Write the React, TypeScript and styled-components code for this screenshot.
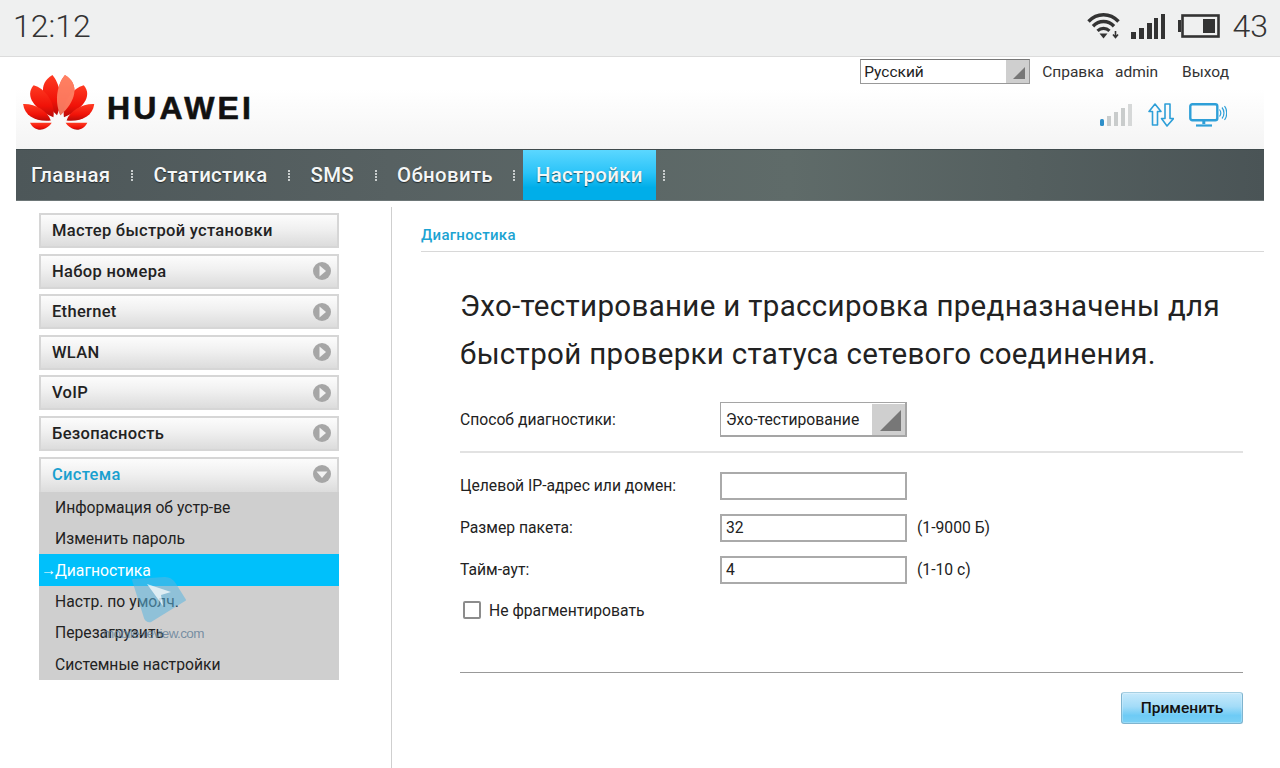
import React from "react";
import styled, { createGlobalStyle } from "styled-components";

const Global = createGlobalStyle`
  html, body { margin: 0; padding: 0; background: #fff; }
  body { font-family: Roboto, "Liberation Sans", sans-serif; color: #222; }
  * { box-sizing: border-box; }
`;
const Screen = styled.div`
  position: relative; width: 1280px; height: 768px; overflow: hidden; background: #fff;
`;
const StatusBar = styled.div`
  height: 57px; background: #eff0f0; border-bottom: 1px solid #dcdcdc;
  display: flex; align-items: center; justify-content: space-between; padding: 0 12px 4px 13px;
`;
const StatusText = styled.span`
  font-size: 32px; font-weight: 300; color: #333; line-height: 1;
`;
const StatusLevel = styled(StatusText)`
  margin-left: 2px;
`;
const StatusIcons = styled.div`
  display: flex; align-items: center; gap: 11px;
`;
const Page = styled.div`
  margin: 0 16px; display: flex; flex-direction: column; height: 711px;
`;
const Header = styled.header`
  height: 92px; background: linear-gradient(#fff 35%, #f4f4f4 100%);
  display: flex; justify-content: space-between; padding-left: 6px;
`;
const Brand = styled.div`
  display: flex; align-items: center; gap: 11px; padding-bottom: 3px; height: 92px;
`;
const BrandName = styled.span`
  font-family: "Liberation Sans", sans-serif; font-weight: 700; font-size: 32px; letter-spacing: 3.2px;
  color: #111; -webkit-text-stroke: 0.6px #111; line-height: 1; margin-top: 12px;
`;
const HeaderRight = styled.div`
  display: flex; flex-direction: column; align-items: flex-end; padding: 2px 35px 0 0;
`;
const TopLinks = styled.div`
  display: flex; align-items: center; font-size: 15.5px; color: #333; height: 25px;
`;
const LangSelect = styled.div`
  width: 170px; height: 25px; border: 1px solid #999; border-top-color: #777; display: flex; background: #fff;
  justify-content: space-between; padding-left: 3px; align-items: center; margin-right: 12px; color: #222;
`;
const ArrowBox = styled.div<{ $w: number }>`
  width: ${(p) => p.$w}px; align-self: stretch; background: #cfcfcf; display: flex; align-items: flex-end; justify-content: flex-end;
  padding: 0 4px 4px 0;
`;
const TopLink = styled.span<{ $ml?: number }>`
  margin-left: ${(p) => p.$ml ?? 0}px;
`;
const Conn = styled.div`
  display: flex; align-items: center; gap: 15px; margin: 19px 2px 0 0;
`;
const Nav = styled.nav`
  height: 52px; display: flex; align-items: stretch; padding-left: 2px;
  background: linear-gradient(90deg, #4d5759 0%, #576162 30%, #5f6b69 62%, #4a5456 100%);
  border-top: 1px solid #3f4a4c; border-bottom: 1px solid #6d7677;
`;
const NavItem = styled.div<{ $active?: boolean }>`
  padding: 0 13px; display: flex; align-items: center; font-size: 20.4px; font-weight: 500; color: #f4f6f6;
  text-shadow: 0 1px 1px rgba(0,0,0,.55); letter-spacing: 0.34px;
  background: ${(p) => (p.$active ? "linear-gradient(#5bd7ff 0%, #2cc4f8 45%, #00aee9 75%, #00aee9 100%)" : "none")};
`;
const NavSep = styled.div`
  width: 17px; display: flex; align-items: center; justify-content: center;
  &::before { content: ""; width: 2px; height: 11px; background: repeating-linear-gradient(#c8cdcd 0 2px, transparent 2px 3px); }
`;
const Body = styled.div`
  flex: 1; display: flex; padding-top: 6px;
`;
const Sidebar = styled.aside`
  width: 376px; border-right: 1px solid #cfcfcf; padding: 6px 0 0 23px; display: flex; flex-direction: column; gap: 5.6px;
`;
const MenuItem = styled.div<{ $open?: boolean }>`
  width: 300px; height: 35px; border: 2px solid #d6d6d6; ${(p) => p.$open && "border-bottom: 0; padding-bottom: 2px !important;"}
  background: linear-gradient(#fcfcfc 0%, #f0f0f0 45%, #dcdcdc 100%);
  display: flex; align-items: center; justify-content: space-between; padding: 0 6px 0 11px;
  font-size: 16.5px; font-weight: 500; color: ${(p) => (p.$open ? "#1aa0cf" : "#222")}; letter-spacing: 0.3px;
`;
const Group = styled.div`
  display: flex; flex-direction: column;
`;
const SubMenu = styled.div`
  width: 300px; background: #cfcfcf; display: flex; flex-direction: column;
`;
const SubItem = styled.div<{ $active?: boolean }>`
  height: 31.4px; display: flex; align-items: center; padding: 0 0 0 16px; font-size: 15.7px; position: relative;
  background: ${(p) => (p.$active ? "#00c0fb" : "transparent")}; color: ${(p) => (p.$active ? "#fff" : "#222")};
`;
const SubArrow = styled.span`
  position: absolute; left: 2px; top: 7px; font-family: "Liberation Sans", sans-serif; font-size: 15px; line-height: 17px; color: #fff;
`;
const Main = styled.main`
  flex: 1; padding: 22px 0 0 29px;
`;
const Crumb = styled.div`
  font-size: 15px; font-weight: 500; color: #1ba3d2; height: 23px; border-bottom: 1px solid #d8d8d8; letter-spacing: .3px; line-height: 13px;
`;
const Panel = styled.div`
  padding: 30px 21px 0 39px;
`;
const Title = styled.h1`
  margin: 0 0 24px 0; font-size: 29.5px; font-weight: 400; line-height: 48px; color: #222; letter-spacing: 0.32px; white-space: nowrap;
`;
const Row = styled.div<{ $h: number }>`
  display: flex; align-items: center; height: ${(p) => p.$h}px; font-size: 15.7px; color: #222;
`;
const Label = styled.div`
  width: 260px;
`;
const DiagSelect = styled.div`
  width: 187px; height: 35px; border: 1px solid #a5a5a5; border-width: 1px 2px 2px 1px; display: flex; justify-content: space-between;
  align-items: center; padding: 1px 0 0 5px; font-size: 15.7px;
`;
const Divider = styled.div<{ $c: string; $mt: number }>`
  height: 1.5px; background: ${(p) => p.$c}; margin-top: ${(p) => p.$mt}px;
`;
const Fields = styled.div`
  display: flex; flex-direction: column; gap: 14px; margin-top: 19px;
`;
const Input = styled.div`
  width: 187px; height: 28px; border: 2px solid #aaa; padding-left: 4px; display: flex; align-items: center; font-size: 15.7px;
`;
const Hint = styled.span`
  margin-left: 10px;
`;
const CheckRow = styled.div`
  display: flex; align-items: center; gap: 8px; margin: 17px 0 0 3px; font-size: 15.7px;
`;
const Check = styled.div`
  width: 18px; height: 18px; border: 2px solid #8c8c8c; border-radius: 2px;
`;
const Actions = styled.div`
  display: flex; justify-content: flex-end; margin-top: 19px;
`;
const Apply = styled.div`
  width: 122px; height: 32px; border: 1px solid #7fb4cf; border-top-color: #a6cfe2; border-radius: 3px;
  background: linear-gradient(#c6e9fb 0%, #a3dcf8 45%, #6ecbf5 75%, #7ad0f5 100%);
  display: flex; align-items: center; justify-content: center; font-size: 15.5px; font-weight: 500; color: #111; box-shadow: inset 0 0 0 1px rgba(255,255,255,.25);
`;
const Watermark = styled.div`
  position: absolute; left: 103px; top: 574px; width: 104px; height: 68px; pointer-events: none;
`;
const WatermarkMark = styled.svg`
  position: absolute; left: 26px; top: 2px;
`;
const WatermarkText = styled.span`
  position: absolute; left: 0; bottom: 0; font-family: "Liberation Sans", sans-serif; font-size: 13.5px; color: rgba(95,125,150,.8); letter-spacing: -0.65px; white-space: nowrap; line-height: 16px;
`;

const Chevron = ({ open }: { open?: boolean }) => (
  <svg width="18" height="18" viewBox="0 0 18 18">
    <circle cx="9" cy="9" r="9" fill="#a6a6a6" />
    {open ? <path d="M3.5 6.5h11L9 13z" fill="#f2f2f2" /> : <path d="M6.5 3.5v11L13 9z" fill="#f2f2f2" />}
  </svg>
);

const Petals = () => (
  <>
    <path d="M172 346C124 305 112 250 158 224C180 250 192 300 172 346Z" />
    <path d="M161 352C106 330 72 288 101 255C134 264 168 306 161 352Z" />
    <path d="M153 362C108 366 74 350 69 312C104 310 144 332 153 362Z" />
    <path d="M156 369H90C98 386 116 394 130 389C140 386 150 378 156 369Z" />
  </>
);

const Logo = () => (
  <svg width="74" height="58" viewBox="66 218 224 176">
    <defs>
      <linearGradient id="redL" x1="0" y1="0" x2="0" y2="1">
        <stop offset="0" stopColor="#ff3b22" />
        <stop offset="0.65" stopColor="#f01208" />
        <stop offset="1" stopColor="#b80b08" />
      </linearGradient>
    </defs>
    <g fill="url(#redL)">
      <Petals />
      <g transform="matrix(-1 0 0 1 354 0)">
        <Petals />
      </g>
    </g>
    <path d="M182 346C230 305 242 250 196 224C174 250 162 300 182 346Z" fill="#ff9878" opacity="0.75" />
  </svg>
);

const Wifi = () => (
  <svg width="33" height="26" viewBox="0 0 33 26" fill="none" stroke="#333" strokeLinecap="butt">
    <path d="M1.5 8.5C10-.5 23-.5 31.5 8.5" strokeWidth="3.4" />
    <path d="M6 13.2C12 7 21 7 27 13.2" strokeWidth="3.4" />
    <path d="M10.5 17.8C14 14.5 19 14.5 22.5 17.8" strokeWidth="3.2" />
    <path d="M12.5 20.5H20.5L16.5 25.5Z" fill="#333" stroke="none" />
    <path d="M28.5 18v5M26 21.5l2.5 3 2.5-3" strokeWidth="1.6" />
  </svg>
);
const Signal = () => (
  <svg width="36" height="25" viewBox="0 0 36 25" fill="#333">
    <rect x="0" y="18" width="5" height="7" /><rect x="8" y="14" width="5" height="11" />
    <rect x="16" y="9" width="5" height="16" /><rect x="23" y="4" width="4" height="21" /><rect x="30" y="0" width="4" height="25" />
  </svg>
);
const Battery = () => (
  <svg width="42" height="24" viewBox="0 0 42 24">
    <rect x="0" y="6" width="3" height="12" fill="#333" />
    <rect x="4.5" y="1.5" width="36" height="21" fill="none" stroke="#333" strokeWidth="2.6" />
    <rect x="25" y="5" width="12" height="14" fill="#333" />
  </svg>
);
const SmallSignal = () => (
  <svg width="33" height="23" viewBox="0 0 33 23">
    <rect x="0" y="15" width="4" height="7" rx="1.5" fill="#2e8fc9" />
    <rect x="7" y="12" width="4" height="10" fill="#c9cccc" /><rect x="14" y="8" width="4" height="14" fill="#c9cccc" />
    <rect x="21" y="4" width="4" height="18" fill="#c9cccc" /><rect x="28" y="0" width="4" height="22" fill="#d6d8d8" />
  </svg>
);
const UpDown = () => (
  <svg width="26" height="24" viewBox="0 0 26 24" fill="none" stroke="#2e9fd8" strokeWidth="1.6" strokeLinejoin="round">
    <path d="M7 1L1 8.5H4.5V22H9.5V8.5H13Z" />
    <path d="M19 23L25.5 15.5H22V1H17V15.5H13.5Z" />
  </svg>
);
const Monitor = () => (
  <svg width="38" height="24" viewBox="0 0 38 24" fill="none" stroke="#2e9fd8">
    <rect x="1.3" y="1.3" width="27" height="16" rx="2" strokeWidth="2.4" />
    <path d="M14.8 18v3" strokeWidth="3" /><path d="M7 22.5h16" strokeWidth="2.2" />
    <path d="M30.5 6.5c1.5 2 1.5 5 0 7M33 4.5c2.6 3.2 2.6 8 0 11M35.5 3c3 4 3 10 0 14" strokeWidth="1.2" />
  </svg>
);
const Corner = ({ size, color }: { size: number; color: string }) => (
  <svg width={size} height={size} viewBox="0 0 10 10"><path d="M10 0V10H0Z" fill={color} /></svg>
);

const sections = ["Набор номера", "Ethernet", "WLAN", "VoIP", "Безопасность"];
const subs = ["Информация об устр-ве", "Изменить пароль", "Диагностика", "Настр. по умолч.", "Перезагрузить", "Системные настройки"];
const nav = ["Главная", "Статистика", "SMS", "Обновить", "Настройки"];

export default function App() {
  return (
    <Screen>
      <Global />
      <StatusBar>
        <StatusText>12:12</StatusText>
        <StatusIcons>
          <Wifi />
          <Signal />
          <Battery />
          <StatusLevel>43</StatusLevel>
        </StatusIcons>
      </StatusBar>
      <Page>
        <Header>
          <Brand>
            <Logo />
            <BrandName>HUAWEI</BrandName>
          </Brand>
          <HeaderRight>
            <TopLinks>
              <LangSelect>
                Русский
                <ArrowBox $w={23}><Corner size={12} color="#777" /></ArrowBox>
              </LangSelect>
              <TopLink>Справка</TopLink>
              <TopLink $ml={11}>admin</TopLink>
              <TopLink $ml={24}>Выход</TopLink>
            </TopLinks>
            <Conn>
              <SmallSignal />
              <UpDown />
              <Monitor />
            </Conn>
          </HeaderRight>
        </Header>
        <Nav>
          {nav.map((n) => (
            <React.Fragment key={n}>
              <NavItem $active={n === "Настройки"}>{n}</NavItem>
              <NavSep />
            </React.Fragment>
          ))}
        </Nav>
        <Body>
          <Sidebar>
            <MenuItem>Мастер быстрой установки</MenuItem>
            {sections.map((s) => (
              <MenuItem key={s}>{s}<Chevron /></MenuItem>
            ))}
            <Group>
              <MenuItem $open>Система<Chevron open /></MenuItem>
              <SubMenu>
                {subs.map((s) => (
                  <SubItem key={s} $active={s === "Диагностика"}>
                    {s === "Диагностика" && <SubArrow>→</SubArrow>}
                    {s}
                  </SubItem>
                ))}
              </SubMenu>
            </Group>
          </Sidebar>
          <Main>
            <Crumb>Диагностика</Crumb>
            <Panel>
              <Title>
                Эхо-тестирование и трассировка предназначены для<br />
                быстрой проверки статуса сетевого соединения.
              </Title>
              <Row $h={35}>
                <Label>Способ диагностики:</Label>
                <DiagSelect>
                  Эхо-тестирование
                  <ArrowBox $w={33}><Corner size={21} color="#777" /></ArrowBox>
                </DiagSelect>
              </Row>
              <Divider $c="#e2e2e2" $mt={14} />
              <Fields>
                <Row $h={28}><Label>Целевой IP-адрес или домен:</Label><Input /></Row>
                <Row $h={28}><Label>Размер пакета:</Label><Input>32</Input><Hint>(1-9000 Б)</Hint></Row>
                <Row $h={28}><Label>Тайм-аут:</Label><Input>4</Input><Hint>(1-10 с)</Hint></Row>
              </Fields>
              <CheckRow><Check />Не фрагментировать</CheckRow>
              <Divider $c="#999" $mt={52} />
              <Actions><Apply>Применить</Apply></Actions>
            </Panel>
          </Main>
        </Body>
      </Page>
      <Watermark>
        <WatermarkMark width="60" height="48" viewBox="0 0 60 48">
          <path d="M4 4L36 2Q42 2 46 8L56 24L22 45Q18 46 16 42Z" fill="#5cb6e0" opacity="0.55" stroke="#5cb6e0" strokeWidth="2" strokeLinejoin="round" />
          <path d="M18 8L42 16L32 19L34 30Z" fill="#fff" opacity="0.7" />
        </WatermarkMark>
        <WatermarkText>mobile-review.com</WatermarkText>
      </Watermark>
    </Screen>
  );
}
